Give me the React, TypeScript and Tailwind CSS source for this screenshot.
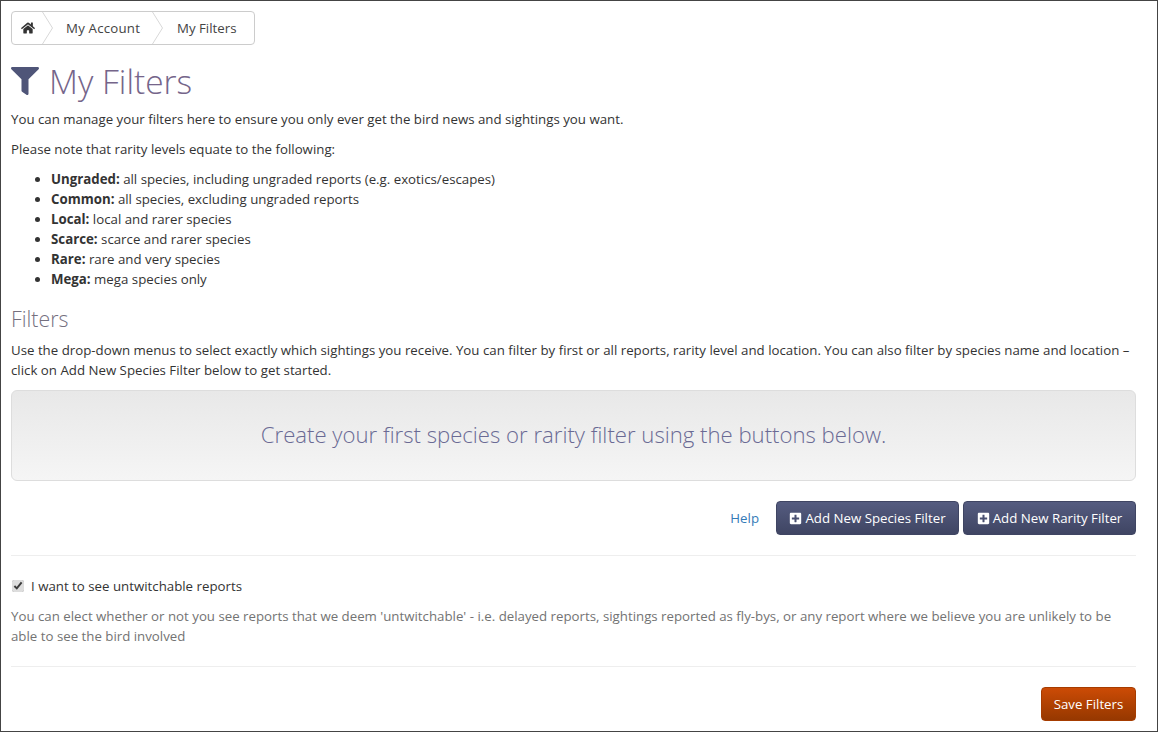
import { FaHome, FaFilter, FaPlusSquare } from "react-icons/fa";

function Chevron() {
  return (
    <svg width="11" height="32" viewBox="0 0 11 32" className="shrink-0">
      <path d="M0.5 0 L10.5 16 L0.5 32" fill="none" stroke="#d8d8d8" strokeWidth="1" />
    </svg>
  );
}

const rarities: [string, string][] = [
  ["Ungraded:", "all species, including ungraded reports (e.g. exotics/escapes)"],
  ["Common:", "all species, excluding ungraded reports"],
  ["Local:", "local and rarer species"],
  ["Scarce:", "scarce and rarer species"],
  ["Rare:", "rare and very species"],
  ["Mega:", "mega species only"],
];

export default function App() {
  return (
    <div className="box-border h-[732px] w-[1158px] overflow-hidden border border-[#444444] bg-white pl-[10px] pr-[21px] pt-[10px] text-[13.27px] leading-[20px] text-[#333333] [font-family:'Open_Sans',sans-serif]">
      <nav className="flex h-[34px] w-[244px] items-center whitespace-nowrap rounded-[4px] border border-[#cccccc] text-[#444444]">
        <div className="flex h-full w-[30px] shrink-0 items-center justify-center pl-[2px]">
          <FaHome className="text-[14px] text-[#333333]" />
        </div>
        <Chevron />
        <div className="flex h-full w-[99px] shrink-0 items-center pl-[13px] tracking-[0.2px]">My Account</div>
        <Chevron />
        <div className="flex h-full items-center pl-[14px]">My Filters</div>
      </nav>

      <h1 className="mt-[14px] flex h-[44px] items-center text-[33.5px] font-light leading-[44px] text-[#75658a]">
        <FaFilter className="mr-[10px] h-[28px] w-[28px] text-[#4f5578]" />
        My Filters
      </h1>

      <p className="mt-[6px]">You can manage your filters here to ensure you only ever get the bird news and sightings you want.</p>
      <p className="mt-[10px]">Please note that rarity levels equate to the following:</p>

      <ul className="mt-[10px] list-disc pl-[40px]">
        {rarities.map(([name, desc]) => (
          <li key={name}>
            <strong className="font-bold">{name}</strong> {desc}
          </li>
        ))}
      </ul>

      <h2 className="mt-[17px] text-[21.3px] font-light leading-[26px] text-[#75707f]">Filters</h2>
      <p className="mt-[8px]">
        Use the drop-down menus to select exactly which sightings you receive. You can filter by first or all reports, rarity level and location. You can also filter by species name and location – click on Add New Species Filter below to get started.
      </p>

      <div className="mt-[10px] flex h-[91px] items-center justify-center rounded-[6px] border border-[#dddddd] bg-linear-to-b from-[#e8e8e8] to-[#f5f5f5] pb-[4px] text-[22.15px] font-light text-[#6a6a94]">
        Create your first species or rarity filter using the buttons below.
      </div>

      <div className="mt-[20px] flex h-[34px] items-center justify-end">
        <a className="mr-[17px] text-[#337ab7]">Help</a>
        <button className="mr-[4px] flex h-[34px] w-[183px] items-center justify-center rounded-[4px] border border-[#3f4563] bg-linear-to-b from-[#555c80] to-[#3f4563] text-white">
          <FaPlusSquare className="mr-[3px] text-[13px]" />
          Add New Species Filter
        </button>
        <button className="flex h-[34px] w-[173px] items-center justify-center rounded-[4px] border border-[#3f4563] bg-linear-to-b from-[#555c80] to-[#3f4563] text-white">
          <FaPlusSquare className="mr-[3px] text-[13px]" />
          Add New Rarity Filter
        </button>
      </div>

      <hr className="mt-[20px] border-t border-[#eeeeee]" />

      <label className="mt-[20px] flex h-[20px] items-center">
        <input type="checkbox" defaultChecked className="ml-[1px] mr-[7px] h-[12px] w-[12px] accent-[#dddddd]" />
        I want to see untwitchable reports
      </label>

      <p className="mt-[10px] text-[#737373]">
        You can elect whether or not you see reports that we deem 'untwitchable' - i.e. delayed reports, sightings reported as fly-bys, or any report where we believe you are unlikely to be able to see the bird involved
      </p>

      <hr className="mt-[20px] border-t border-[#eeeeee]" />

      <div className="mt-[20px] flex justify-end">
        <button className="h-[34px] w-[95px] rounded-[4px] border border-[#a63c00] bg-linear-to-b from-[#cc4b06] to-[#963800] text-white">
          Save Filters
        </button>
      </div>
    </div>
  );
}
